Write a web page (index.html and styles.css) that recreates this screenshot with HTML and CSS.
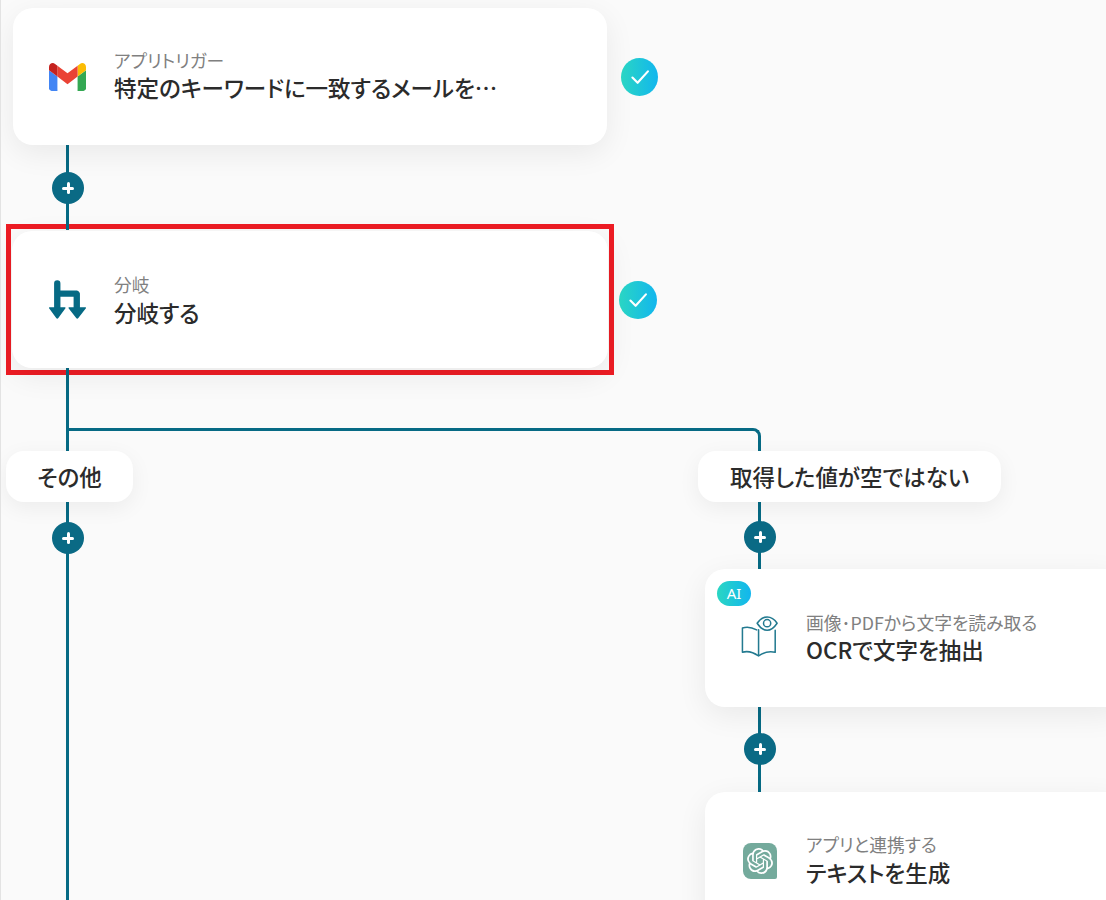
FILE: index.html
```html
<!DOCTYPE html>
<html lang="ja">
<head>
  <meta charset="UTF-8">
  <title>フロー</title>
  <link rel="stylesheet" href="styles.css">
</head>
<body>
<div class="canvas">
  <div class="frame"></div>

  <div class="line l1"></div>
  <div class="line l2"></div>
  <div class="branch"></div>
  <div class="line l3"></div>
  <div class="line l4"></div>

  <div class="card c1">
    <div class="icon">
      <svg class="gmail" viewBox="52 42 88 66">
        <path fill="#4285f4" d="M58 108h14V74L52 59v43c0 3.32 2.69 6 6 6"/>
        <path fill="#34a853" d="M120 108h14c3.32 0 6-2.69 6-6V59l-20 15"/>
        <path fill="#fbbc04" d="M120 48v26l20-15v-8c0-7.42-8.47-11.65-14.4-7.2"/>
        <path fill="#ea4335" d="M72 74V48l24 18 24-18v26L96 92"/>
        <path fill="#c5221f" d="M52 51v8l20 15V48l-5.6-4.2c-5.94-4.45-14.4-.22-14.4 7.2"/>
      </svg>
    </div>
    <div class="txt">
      <div class="sub">アプリトリガー</div>
      <div class="ttl">特定のキーワードに一致するメールを…</div>
    </div>
  </div>
  <div class="check k1"><svg viewBox="0 0 24 24"><path d="M5 12.500l4.800 4.800 9.500-10.500"/></svg></div>

  <div class="card c2">
    <div class="icon">
      <svg class="split" viewBox="0 0 40 40">
        <path class="split-bar" d="M9.5 3v26M9.5 13.5h19.5a1 1 0 0 1 .5 .5V29"/>
        <path class="split-head" d="M1.5 27.500h16a.6 .6 0 0 1 .4 1l-7.300 10a1.400 1.400 0 0 1-2.200 0L1.100 28.500a.6 .6 0 0 1 .4-1zM21.500 27.500h17a.6 .6 0 0 1 .4 1l-7.800 10a1.400 1.400 0 0 1-2.200 0L21.100 28.500a.6 .6 0 0 1 .4-1z"/>
      </svg>
    </div>
    <div class="txt">
      <div class="sub">分岐</div>
      <div class="ttl">分岐する</div>
    </div>
  </div>
  <div class="check k2"><svg viewBox="0 0 24 24"><path d="M5 12.500l4.800 4.800 9.500-10.500"/></svg></div>

  <div class="pill p1">その他</div>
  <div class="pill p2">取得した値が空ではない</div>

  <div class="card c3">
    <span class="ai">AI</span>
    <div class="icon">
      <svg class="book" viewBox="0 0 40 44">
        <path d="M18.5 14.5v27.5M16.5 14.500C11 11.500 6 11 1.500 12.500v25.500C7 36.500 13 38 18.500 42 24 38 30 36.500 36 38V15"/>
        <path d="M17 7.500C20 3 24 1 27.500 1S35 3 38 7.500C35 12 31 15 27.500 15S20 12 17 7.500z"/>
        <circle cx="27.500" cy="7.500" r="3.800"/>
      </svg>
    </div>
    <div class="txt">
      <div class="sub">画像･PDFから文字を読み取る</div>
      <div class="ttl">OCRで文字を抽出</div>
    </div>
  </div>

  <div class="card c4">
    <div class="icon">
      <div class="tile">
        <svg viewBox="0 0 24 24"><path d="M22.2819 9.8211a5.9847 5.9847 0 0 0-.5157-4.9108 6.0462 6.0462 0 0 0-6.5098-2.9A6.0651 6.0651 0 0 0 4.9807 4.1818a5.9847 5.9847 0 0 0-3.9977 2.9 6.0462 6.0462 0 0 0 .7427 7.0966 5.98 5.98 0 0 0 .511 4.9107 6.051 6.051 0 0 0 6.5146 2.9001A5.9847 5.9847 0 0 0 13.2599 24a6.0557 6.0557 0 0 0 5.7718-4.2058 5.9894 5.9894 0 0 0 3.9977-2.9001 6.0557 6.0557 0 0 0-.7475-7.0729zm-9.022 12.6081a4.4755 4.4755 0 0 1-2.8764-1.0408l.1419-.0804 4.7783-2.7582a.7948.7948 0 0 0 .3927-.6813v-6.7369l2.02 1.1686a.071.071 0 0 1 .038.052v5.5826a4.504 4.504 0 0 1-4.4945 4.4944zm-9.6607-4.1254a4.4708 4.4708 0 0 1-.5346-3.0137l.142.0852 4.783 2.7582a.7712.7712 0 0 0 .7806 0l5.8428-3.3685v2.3324a.0804.0804 0 0 1-.0332.0615L9.74 19.9502a4.4992 4.4992 0 0 1-6.1408-1.6464zM2.3408 7.8956a4.485 4.485 0 0 1 2.3655-1.9728V11.6a.7664.7664 0 0 0 .3879.6765l5.8144 3.3543-2.0201 1.1685a.0757.0757 0 0 1-.071 0l-4.8303-2.7865A4.504 4.504 0 0 1 2.3408 7.872zm16.5963 3.8558L13.1038 8.364 15.1192 7.2a.0757.0757 0 0 1 .071 0l4.8303 2.7913a4.4944 4.4944 0 0 1-.6765 8.1042v-5.6772a.79.79 0 0 0-.407-.667zm2.0107-3.0231l-.142-.0852-4.7735-2.7818a.7759.7759 0 0 0-.7854 0L9.409 9.2297V6.8974a.0662.0662 0 0 1 .0284-.0615l4.8303-2.7866a4.4992 4.4992 0 0 1 6.6802 4.66zM8.3065 12.863l-2.02-1.1638a.0804.0804 0 0 1-.038-.0567V6.0742a4.4992 4.4992 0 0 1 7.3757-3.4537l-.142.0805L8.704 5.459a.7948.7948 0 0 0-.3927.6813zm1.0976-2.3654l2.602-1.4998 2.6069 1.4998v2.9994l-2.5974 1.5093-2.6067-1.4997Z"/></svg>
      </div>
    </div>
    <div class="txt">
      <div class="sub">アプリと連携する</div>
      <div class="ttl">テキストを生成</div>
    </div>
  </div>

  <div class="plus a1"></div>
  <div class="plus a2"></div>
  <div class="plus a3"></div>
  <div class="plus a4"></div>
</div>
</body>
</html>
```
FILE: styles.css
```css
html,body{margin:0;padding:0;}
body{background:#fafafa;font-family:"Noto Sans CJK JP","Noto Sans",sans-serif;color:#2b2b2b;overflow:hidden;}

/* フロー図のキャンバス */
.canvas{position:relative;width:1106px;height:900px;overflow:hidden;border-left:1px solid #e3e3e3;box-sizing:border-box;margin:0;}

.frame{position:absolute;left:5px;top:224px;width:608px;height:151px;box-sizing:border-box;border:5px solid #ed1c24;}

.line{position:absolute;width:3px;background:#066a84;}
.l1{left:65px;top:140px;height:90px;}
.l2{left:65px;top:368px;height:532px;}
.l3{left:757px;top:440px;height:130px;}
.l4{left:757px;top:700px;height:95px;}
.branch{position:absolute;left:66px;top:428px;width:694px;height:30px;box-sizing:border-box;border-top:3px solid #066a84;border-right:3px solid #066a84;border-top-right-radius:8px;}

.card{position:absolute;background:#fff;border-radius:20px;box-shadow:0 8px 30px rgba(0,0,0,.07);display:flex;align-items:center;box-sizing:border-box;}
.c1{left:12px;top:8px;width:594px;height:137px;}
.c2{left:11px;top:231px;width:596px;height:137px;}
.c3{left:704px;top:569px;width:420px;height:138px;}
.c4{left:704px;top:792px;width:420px;height:138px;}

.icon{width:38px;flex:none;display:flex;justify-content:center;margin-right:27px;}
.c1 .icon{margin-left:36px;}
.c2 .icon{margin-left:37px;}
.c3 .icon,.c4 .icon{margin-left:36px;}

.txt{min-width:0;font-feature-settings:"palt";}
.sub{font-size:17.800px;line-height:22px;color:#808080;white-space:nowrap;}
.ttl{font-size:22.500px;line-height:32px;font-weight:500;white-space:nowrap;}
.c1 .txt{margin-top:-1px;}
.c2 .txt{margin-top:1px;}
.c2 .ttl,.c4 .ttl{margin-top:1px;}
.c3 .txt{margin-top:-1px;}
.c4 .txt{margin-top:-1px;}

.gmail{width:37px;height:28px;display:block;margin-left:-2px;}
.split{width:40px;height:40px;display:block;margin-left:-1px;}
.split-bar{fill:none;stroke:#066a84;stroke-width:6.500;stroke-linecap:round;}
.split-head{fill:#066a84;}
.book{width:38px;height:42px;display:block;margin-top:-2px;overflow:visible;}
.book path,.book circle{fill:none;stroke:#237a90;stroke-width:1.600;stroke-linejoin:round;stroke-linecap:round;}

.tile{width:34px;height:36px;background:#74aa9c;border-radius:8px 8px 2px 8px;display:flex;align-items:center;justify-content:center;}
.tile svg{width:26px;height:26px;fill:#fff;}

.ai{position:absolute;left:12px;top:12px;width:34px;height:25px;border-radius:13px;background:linear-gradient(90deg,#2ad6c3,#12b6ee);color:#fff;font-size:15px;line-height:25px;text-align:center;font-family:"Noto Sans",sans-serif;}

.check{position:absolute;border-radius:50%;background:linear-gradient(90deg,#2ad6c3,#12b6ee);display:flex;align-items:center;justify-content:center;}
.check svg{width:26px;height:26px;fill:none;stroke:#fff;stroke-width:2;stroke-linecap:round;stroke-linejoin:round;}
.k1{left:620px;top:58px;width:37px;height:38px;}
.k2{left:618px;top:281px;width:38px;height:38px;}

.pill{position:absolute;top:451px;height:51px;background:#fff;border-radius:18px;box-shadow:0 6px 22px rgba(0,0,0,.06);font-size:22.500px;font-weight:500;font-feature-settings:"palt";line-height:51px;text-align:center;white-space:nowrap;}
.p1{left:5px;width:127px;}
.p2{left:697px;width:303px;}

.plus{position:absolute;width:32px;height:32px;border-radius:50%;background:#0a6a85;}
.plus::before,.plus::after{content:"";position:absolute;background:#fff;border-radius:2px;}
.plus::before{left:10px;top:14.500px;width:12px;height:3px;}
.plus::after{left:14.500px;top:10px;width:3px;height:12px;}
.a1{left:51px;top:172px;}
.a2{left:51px;top:522px;}
.a3{left:743px;top:521px;}
.a4{left:743px;top:733px;}
```
